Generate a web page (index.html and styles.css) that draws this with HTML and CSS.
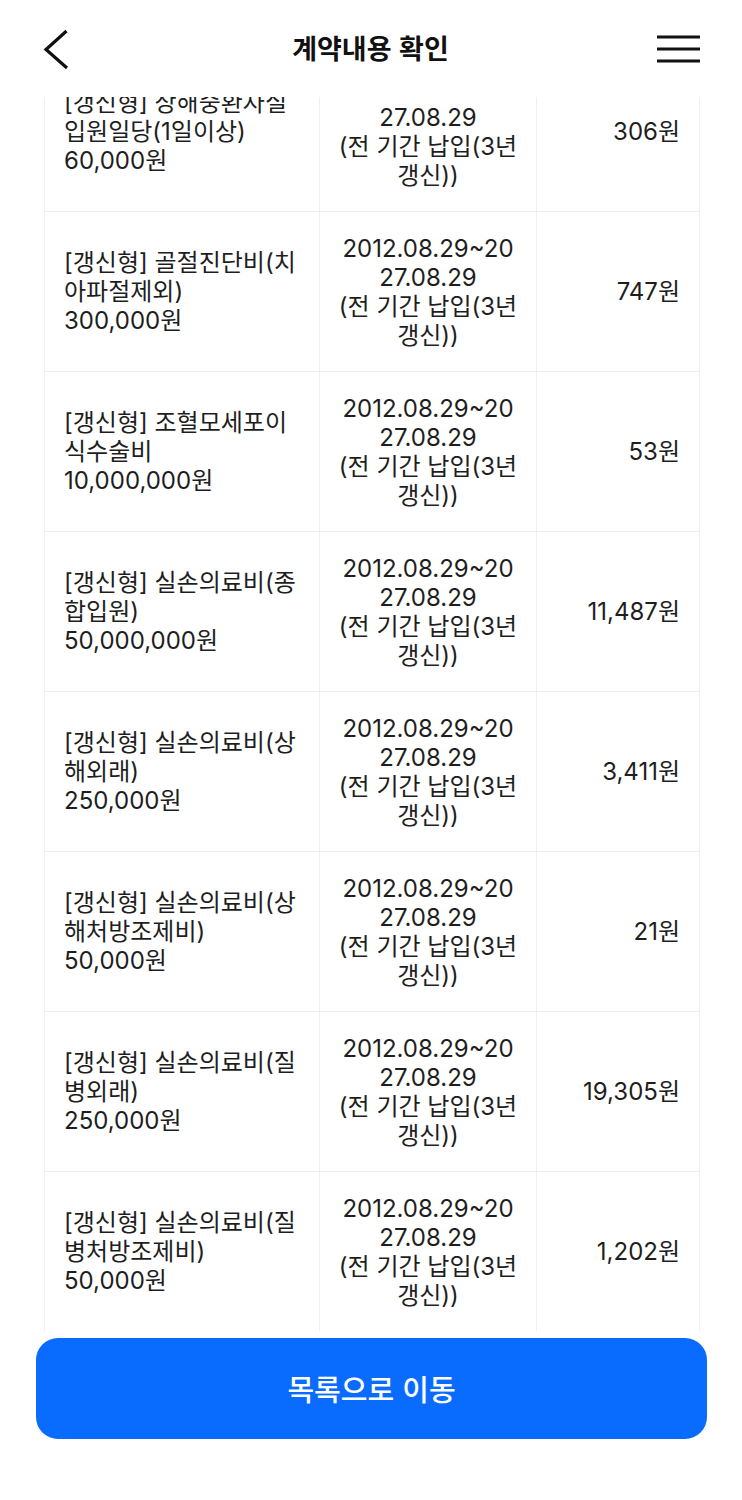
FILE: index.html
```html
<!DOCTYPE html>
<html lang="ko">
<head>
<meta charset="utf-8">
<title>계약내용 확인</title>
<link rel="stylesheet" href="styles.css">
</head>
<body>
<div class="page">
  <header class="header">
    <div class="h-left">
      <svg class="back" width="32" height="44" viewBox="0 0 32 44" aria-hidden="true">
        <path d="M26.5 4 L6 22.5 L27 41" fill="none" stroke="#111" stroke-width="3.2" stroke-linejoin="miter"/>
      </svg>
    </div>
    <h1 class="title">계약내용 확인</h1>
    <div class="h-right">
      <svg class="menu" width="44" height="30" viewBox="0 0 44 30" aria-hidden="true">
        <path d="M0 3 H43 M0 15 H43 M0 27 H43" fill="none" stroke="#111" stroke-width="3.2"/>
      </svg>
    </div>
  </header>

  <main class="content">
    <table class="cov">
      <colgroup>
        <col class="c-name">
        <col class="c-period">
        <col class="c-price">
      </colgroup>
      <tbody>
        <tr>
          <td class="name">[갱신형] 상해중환자실입원일당(1일이상)<span class="amt">60,000원</span></td>
          <td class="period"><span class="dates">2012.08.29~2027.08.29</span><span class="note">(전 기간 납입(3년 갱신))</span></td>
          <td class="price">306원</td>
        </tr>
        <tr>
          <td class="name">[갱신형] 골절진단비(치아파절제외)<span class="amt">300,000원</span></td>
          <td class="period"><span class="dates">2012.08.29~2027.08.29</span><span class="note">(전 기간 납입(3년 갱신))</span></td>
          <td class="price">747원</td>
        </tr>
        <tr>
          <td class="name">[갱신형] 조혈모세포이식수술비<span class="amt">10,000,000원</span></td>
          <td class="period"><span class="dates">2012.08.29~2027.08.29</span><span class="note">(전 기간 납입(3년 갱신))</span></td>
          <td class="price">53원</td>
        </tr>
        <tr>
          <td class="name">[갱신형] 실손의료비(종합입원)<span class="amt">50,000,000원</span></td>
          <td class="period"><span class="dates">2012.08.29~2027.08.29</span><span class="note">(전 기간 납입(3년 갱신))</span></td>
          <td class="price">11,487원</td>
        </tr>
        <tr>
          <td class="name">[갱신형] 실손의료비(상해외래)<span class="amt">250,000원</span></td>
          <td class="period"><span class="dates">2012.08.29~2027.08.29</span><span class="note">(전 기간 납입(3년 갱신))</span></td>
          <td class="price">3,411원</td>
        </tr>
        <tr>
          <td class="name">[갱신형] 실손의료비(상해처방조제비)<span class="amt">50,000원</span></td>
          <td class="period"><span class="dates">2012.08.29~2027.08.29</span><span class="note">(전 기간 납입(3년 갱신))</span></td>
          <td class="price">21원</td>
        </tr>
        <tr>
          <td class="name">[갱신형] 실손의료비(질병외래)<span class="amt">250,000원</span></td>
          <td class="period"><span class="dates">2012.08.29~2027.08.29</span><span class="note">(전 기간 납입(3년 갱신))</span></td>
          <td class="price">19,305원</td>
        </tr>
        <tr>
          <td class="name">[갱신형] 실손의료비(질병처방조제비)<span class="amt">50,000원</span></td>
          <td class="period"><span class="dates">2012.08.29~2027.08.29</span><span class="note">(전 기간 납입(3년 갱신))</span></td>
          <td class="price">1,202원</td>
        </tr>
        <tr>
          <td class="name">[갱신형] 실손의료비(질병입원)<span class="amt">50,000,000원</span></td>
          <td class="period"><span class="dates">2012.08.29~2027.08.29</span><span class="note">(전 기간 납입(3년 갱신))</span></td>
          <td class="price">9,874원</td>
        </tr>
      </tbody>
    </table>
  </main>

  <footer class="footer">
    <button class="btn" type="button">목록으로 이동</button>
  </footer>
</div>
</body>
</html>
```

FILE: styles.css
```css
* { box-sizing: border-box; }

html, body {
  margin: 0;
  padding: 0;
  background: #ffffff;
}

body {
  font-family: Inter, "Noto Sans CJK KR", sans-serif;
  color: #1e1e1e;
}

.page {
  width: 742px;
  height: 1500px;
  display: flex;
  flex-direction: column;
  overflow: hidden;
}

.header {
  height: 97px;
  flex: 0 0 97px;
  display: grid;
  grid-template-columns: 1fr auto 1fr;
  align-items: center;
  padding: 0 41px 0 40px;
}

.h-left { display: flex; justify-content: flex-start; }
.h-right { display: flex; justify-content: flex-end; }
.back, .menu { display: block; }

.title {
  margin: 0;
  font-family: "Noto Sans CJK KR", sans-serif;
  font-size: 27px;
  font-weight: 700;
  color: #111;
  line-height: 1;
  padding-bottom: 3px;
}

.content {
  flex: 0 0 1234px;
  height: 1234px;
  overflow: hidden;
  padding: 0 43px 0 44px;
}

.cov {
  width: 655px;
  margin-top: -46px;
  border-collapse: collapse;
  table-layout: fixed;
  font-size: 24px;
  line-height: 29px;
}

.c-name { width: 275px; }
.c-period { width: 217px; }
.c-price { width: 163px; }

.cov td {
  border: 1px solid #efefef;
  height: 160px;
  vertical-align: middle;
  padding: 0;
}

.name {
  padding: 0 14px 0 19px !important;
  text-align: left;
  line-break: anywhere;
  word-break: break-all;
}

.name .amt { display: block; }

.period {
  padding: 0 19px !important;
  text-align: center;
  word-break: break-all;
  line-break: anywhere;
}

.period .dates { display: block; }

.period .note {
  display: block;
  margin: 0 -8px;
  word-break: keep-all;
  line-break: auto;
}

.price {
  padding: 0 19px 0 10px !important;
  text-align: right;
}

.footer {
  flex: 1 1 auto;
  padding: 7px 35px 0 36px;
}

.btn {
  display: flex;
  align-items: center;
  justify-content: center;
  width: 100%;
  height: 101px;
  border: 0;
  border-radius: 22px;
  background: #0a6cff;
  color: #ffffff;
  font-family: "Noto Sans CJK KR", sans-serif;
  font-size: 29px;
  font-weight: 500;
  padding: 0 0 2px;
}
```
